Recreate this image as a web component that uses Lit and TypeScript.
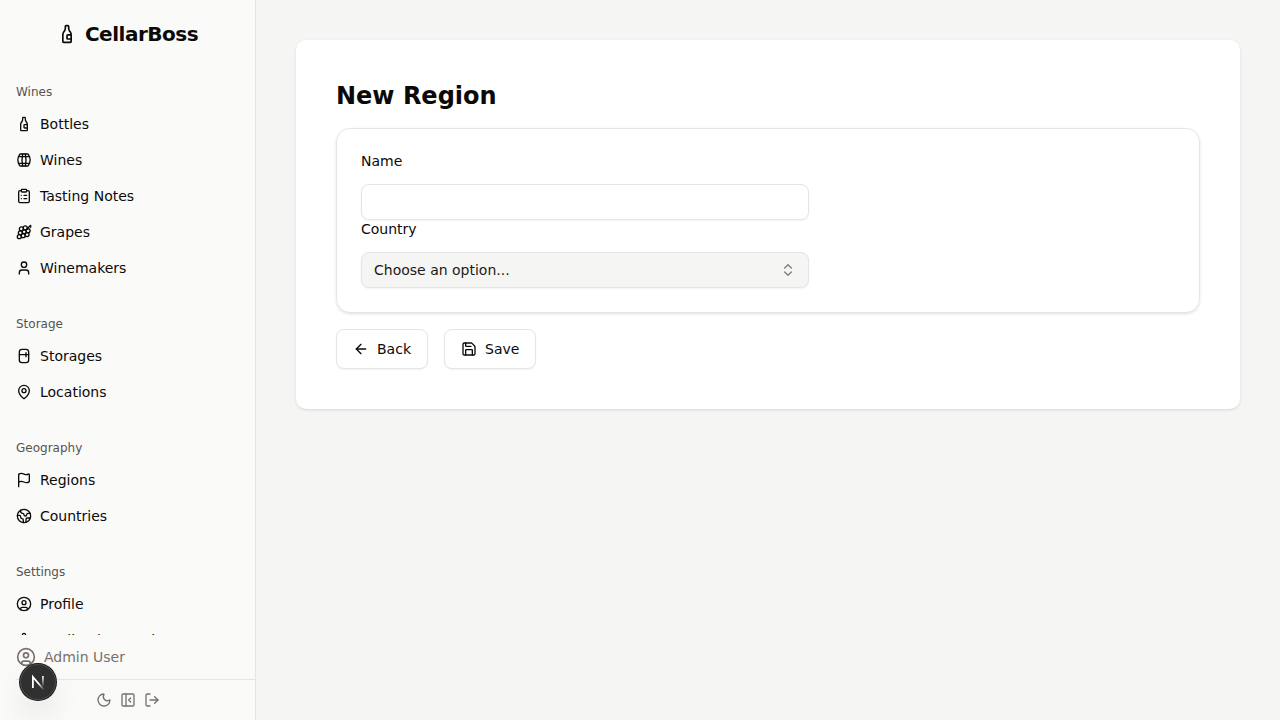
import { LitElement, html, css, svg } from "lit";
import { customElement } from "lit/decorators.js";

const paths = {
  bottle: svg`<path d="M10 3a1 1 0 0 1 1-1h2a1 1 0 0 1 1 1v2a6 6 0 0 0 1.2 3.6l.6.8A6 6 0 0 1 17 13v8a1 1 0 0 1-1 1H8a1 1 0 0 1-1-1v-8a6 6 0 0 1 1.2-3.6l.6-.8A6 6 0 0 0 10 5z"/><path d="M17 13h-4a1 1 0 0 0-1 1v3a1 1 0 0 0 1 1h4"/>`,
  barrel: svg`<path d="M10 3a41 41 0 0 0 0 18"/><path d="M14 3a41 41 0 0 1 0 18"/><path d="M17 3a2 2 0 0 1 1.68.92 15.25 15.25 0 0 1 0 16.16A2 2 0 0 1 17 21H7a2 2 0 0 1-1.68-.92 15.25 15.25 0 0 1 0-16.16A2 2 0 0 1 7 3z"/><path d="M3.84 17h16.32"/><path d="M3.84 7h16.32"/>`,
  clipboard: svg`<rect width="8" height="4" x="8" y="2" rx="1"/><path d="M16 4h2a2 2 0 0 1 2 2v14a2 2 0 0 1-2 2H6a2 2 0 0 1-2-2V6a2 2 0 0 1 2-2h2"/><path d="M12 11h4"/><path d="M12 16h4"/><path d="M8 11h.01"/><path d="M8 16h.01"/>`,
  grape: svg`<path d="M22 5V2l-5.89 5.89"/><circle cx="16.6" cy="15.89" r="3"/><circle cx="8.11" cy="7.4" r="3"/><circle cx="12.35" cy="11.65" r="3"/><circle cx="13.91" cy="5.85" r="3"/><circle cx="18.15" cy="10.09" r="3"/><circle cx="6.56" cy="13.2" r="3"/><circle cx="10.8" cy="17.44" r="3"/><circle cx="5" cy="19" r="3"/>`,
  user: svg`<path d="M19 21v-2a4 4 0 0 0-4-4H9a4 4 0 0 0-4 4v2"/><circle cx="12" cy="7" r="4"/>`,
  fridge: svg`<path d="M5 6a4 4 0 0 1 4-4h6a4 4 0 0 1 4 4v12a4 4 0 0 1-4 4H9a4 4 0 0 1-4-4Z"/><path d="M5 10h14"/><path d="M15 7v6"/>`,
  pin: svg`<path d="M20 10c0 4.993-5.539 10.193-7.399 11.799a1 1 0 0 1-1.202 0C9.539 20.193 4 14.993 4 10a8 8 0 0 1 16 0"/><circle cx="12" cy="10" r="3"/>`,
  flag: svg`<path d="M4 22V4a1 1 0 0 1 .4-.8A6 6 0 0 1 8 2c3 0 5 2 7.333 2q2 0 3.067-.8A1 1 0 0 1 20 4v10a1 1 0 0 1-.4.8A6 6 0 0 1 16 16c-3 0-5-2-8-2a6 6 0 0 0-4 1.528"/>`,
  earth: svg`<path d="M21.54 15H17a2 2 0 0 0-2 2v4.54"/><path d="M7 3.34V5a3 3 0 0 0 3 3a2 2 0 0 1 2 2c0 1.1.9 2 2 2a2 2 0 0 0 2-2c0-1.1.9-2 2-2h3.17"/><path d="M11 21.95V18a2 2 0 0 0-2-2a2 2 0 0 1-2-2v-1a2 2 0 0 0-2-2H2.05"/><circle cx="12" cy="12" r="10"/>`,
  profile: svg`<circle cx="12" cy="12" r="10"/><circle cx="12" cy="10" r="3"/><path d="M7 20.662V19a2 2 0 0 1 2-2h6a2 2 0 0 1 2 2v1.662"/>`,
  gear: svg`<path d="M9.671 4.136a2.34 2.34 0 0 1 4.659 0 2.34 2.34 0 0 0 3.319 1.915 2.34 2.34 0 0 1 2.33 4.033 2.34 2.34 0 0 0 0 3.831 2.34 2.34 0 0 1-2.33 4.033 2.34 2.34 0 0 0-3.319 1.915 2.34 2.34 0 0 1-4.659 0 2.34 2.34 0 0 0-3.32-1.915 2.34 2.34 0 0 1-2.33-4.033 2.34 2.34 0 0 0 0-3.831A2.34 2.34 0 0 1 6.35 6.051a2.34 2.34 0 0 0 3.319-1.915"/><circle cx="12" cy="12" r="3"/>`,
  moon: svg`<path d="M20.985 12.486a9 9 0 1 1-9.473-9.472c.405-.022.617.46.402.803a6 6 0 0 0 8.268 8.268c.344-.215.825-.004.803.401"/>`,
  panel: svg`<rect width="18" height="18" x="3" y="3" rx="2"/><path d="M9 3v18"/><path d="m16 15-3-3 3-3"/>`,
  logout: svg`<path d="m16 17 5-5-5-5"/><path d="M21 12H9"/><path d="M9 21H5a2 2 0 0 1-2-2V5a2 2 0 0 1 2-2h4"/>`,
  back: svg`<path d="m12 19-7-7 7-7"/><path d="M19 12H5"/>`,
  save: svg`<path d="M15.2 3a2 2 0 0 1 1.4.6l3.8 3.8a2 2 0 0 1 .6 1.4V19a2 2 0 0 1-2 2H5a2 2 0 0 1-2-2V5a2 2 0 0 1 2-2z"/><path d="M17 21v-7a1 1 0 0 0-1-1H8a1 1 0 0 0-1 1v7"/><path d="M7 3v4a1 1 0 0 0 1 1h7"/>`,
  chevrons: svg`<path d="m7 15 5 5 5-5"/><path d="m7 9 5-5 5 5"/>`,
};
type IconName = keyof typeof paths;

const icon = (name: IconName, size = "") =>
  html`<svg class="icon ${size}" viewBox="0 0 24 24" aria-hidden="true">${paths[name]}</svg>`;

const groups: { title: string; items: [IconName, string][] }[] = [
  {
    title: "Wines",
    items: [
      ["bottle", "Bottles"],
      ["barrel", "Wines"],
      ["clipboard", "Tasting Notes"],
      ["grape", "Grapes"],
      ["user", "Winemakers"],
    ],
  },
  { title: "Storage", items: [["fridge", "Storages"], ["pin", "Locations"]] },
  { title: "Geography", items: [["flag", "Regions"], ["earth", "Countries"]] },
  { title: "Settings", items: [["profile", "Profile"], ["gear", "Application Settings"]] },
];

@customElement("app-root")
export class AppRoot extends LitElement {
  static styles = css`
    :host {
      display: flex;
      height: 100vh;
      background: #f5f5f4;
      color: #0c0a09;
      font: 14px/20px "DejaVu Sans", sans-serif;
    }
    * { box-sizing: border-box; }
    .icon {
      width: 16px;
      height: 16px;
      flex: none;
      fill: none;
      stroke: currentColor;
      stroke-width: 2;
      stroke-linecap: round;
      stroke-linejoin: round;
    }
    .icon.large { width: 20px; height: 20px; }
    button, input, select { font: inherit; color: inherit; margin: 0; }
    a { color: inherit; text-decoration: none; }

    .sidebar {
      position: relative;
      display: flex;
      flex-direction: column;
      flex: none;
      width: 256px;
      background: #fafaf9;
      border-right: 1px solid #e5e5e5;
    }
    .brand {
      display: flex;
      align-items: center;
      justify-content: center;
      gap: 8px;
      padding: 20px 8px;
      font-size: 20px;
      line-height: 28px;
      font-weight: 700;
      letter-spacing: -0.5px;
    }
    .nav { flex: 1; min-height: 0; overflow: auto; scrollbar-width: none; }
    .group { padding: 8px; }
    .group + .group { padding-top: 16px; }
    .title {
      display: flex;
      align-items: center;
      height: 32px;
      margin: 0;
      padding: 0 8px;
      font-size: 12px;
      line-height: 16px;
      font-weight: 400;
      color: #57534e;
    }
    .list {
      display: flex;
      flex-direction: column;
      gap: 4px;
      list-style: none;
      margin: 0;
      padding: 0;
    }
    .link { display: flex; align-items: center; gap: 8px; height: 32px; padding: 8px; }
    .account {
      display: flex;
      align-items: center;
      gap: 8px;
      height: 44px;
      padding: 0 16px;
      color: #78716c;
    }
    .tools {
      display: flex;
      justify-content: center;
      align-items: center;
      gap: 8px;
      height: 41px;
      margin-left: 16px;
      padding-right: 16px;
      border-top: 1px solid #e5e5e5;
      color: #78716c;
    }
    .tool { display: flex; padding: 0; border: 0; background: none; }
    .badge {
      position: absolute;
      left: 20px;
      bottom: 20px;
      display: flex;
      padding: 0;
      border: 0;
      border-radius: 50%;
      background: #303030;
      box-shadow: 0 0 0 1px #171717, inset 0 0 0 1px #4a4a4a, 0 16px 32px -8px rgba(0, 0, 0, 0.24);
    }
    .badge svg { width: 36px; height: 36px; }

    .main { flex: 1; min-width: 0; padding: 40px; overflow: auto; }
    .page {
      padding: 40px;
      background: #fff;
      border-radius: 10px;
      box-shadow: 0 1px 3px rgba(0, 0, 0, 0.1), 0 1px 2px -1px rgba(0, 0, 0, 0.1);
    }
    .heading { margin: 0 0 16px; font-size: 24px; line-height: 32px; font-weight: 700; }
    .card {
      padding: 23px 24px 24px;
      border: 1px solid #e5e5e5;
      border-radius: 14px;
      box-shadow: 0 1px 3px rgba(0, 0, 0, 0.1), 0 1px 2px -1px rgba(0, 0, 0, 0.1);
    }
    .fields { max-width: 448px; }
    .label { display: block; line-height: 18px; padding-bottom: 14px; }
    .control {
      display: block;
      width: 100%;
      height: 36px;
      padding: 0 12px;
      border: 1px solid #e5e5e5;
      border-radius: 8px;
      background: #fff;
      box-shadow: 0 1px 2px rgba(0, 0, 0, 0.05);
    }
    .select { display: grid; align-items: center; }
    .select > * { grid-area: 1 / 1; }
    .select .control { appearance: none; background: #f5f5f4; color: #1c1917; }
    .select .icon { justify-self: end; margin-right: 13px; opacity: 0.5; pointer-events: none; }
    .actions { display: flex; gap: 16px; margin-top: 16px; }
    .button {
      display: flex;
      align-items: center;
      gap: 8px;
      height: 40px;
      padding: 0 16px;
      border: 1px solid #e5e5e5;
      border-radius: 8px;
      background: #fff;
      box-shadow: 0 1px 2px rgba(0, 0, 0, 0.05);
    }
  `;

  render() {
    return html`
      <aside class="sidebar">
        <a class="brand" href="#">${icon("bottle", "large")}<span>CellarBoss</span></a>
        <nav class="nav">
          ${groups.map(
            (g) => html`<section class="group">
              <h2 class="title">${g.title}</h2>
              <ul class="list">
                ${g.items.map(([name, label]) => html`<li><a class="link" href="#">${icon(name)}<span>${label}</span></a></li>`)}
              </ul>
            </section>`
          )}
        </nav>
        <div class="account">${icon("profile", "large")}<span>Admin User</span></div>
        <div class="tools">
          <button class="tool" aria-label="Toggle theme">${icon("moon")}</button>
          <button class="tool" aria-label="Collapse sidebar">${icon("panel")}</button>
          <button class="tool" aria-label="Log out">${icon("logout")}</button>
        </div>
        <button class="badge" aria-label="Developer tools">
          <svg viewBox="0 0 36 36" fill="none" aria-hidden="true">
            <defs>
              <linearGradient id="stem" x1="0" y1="12" x2="0" y2="23" gradientUnits="userSpaceOnUse">
                <stop stop-color="#fff" /><stop offset="1" stop-color="#fff" stop-opacity="0" />
              </linearGradient>
              <linearGradient id="slash" x1="19" y1="19" x2="24" y2="26" gradientUnits="userSpaceOnUse">
                <stop stop-color="#fff" /><stop offset="1" stop-color="#fff" stop-opacity="0" />
              </linearGradient>
            </defs>
            <path d="M12.9 24V13L23.6 25.5" stroke="url(#slash)" stroke-width="1.8" />
            <path d="M22.9 12v10" stroke="url(#stem)" stroke-width="1.7" />
          </svg>
        </button>
      </aside>
      <main class="main">
        <section class="page">
          <h1 class="heading">New Region</h1>
          <form @submit=${(e: Event) => e.preventDefault()}>
            <div class="card">
              <div class="fields">
                <label class="label" for="name">Name</label>
                <input class="control" id="name" type="text" />
                <label class="label" for="country">Country</label>
                <div class="select">
                  <select class="control" id="country"><option>Choose an option...</option></select>
                  ${icon("chevrons")}
                </div>
              </div>
            </div>
            <div class="actions">
              <button class="button" type="button">${icon("back")}<span>Back</span></button>
              <button class="button" type="submit">${icon("save")}<span>Save</span></button>
            </div>
          </form>
        </section>
      </main>
    `;
  }
}
